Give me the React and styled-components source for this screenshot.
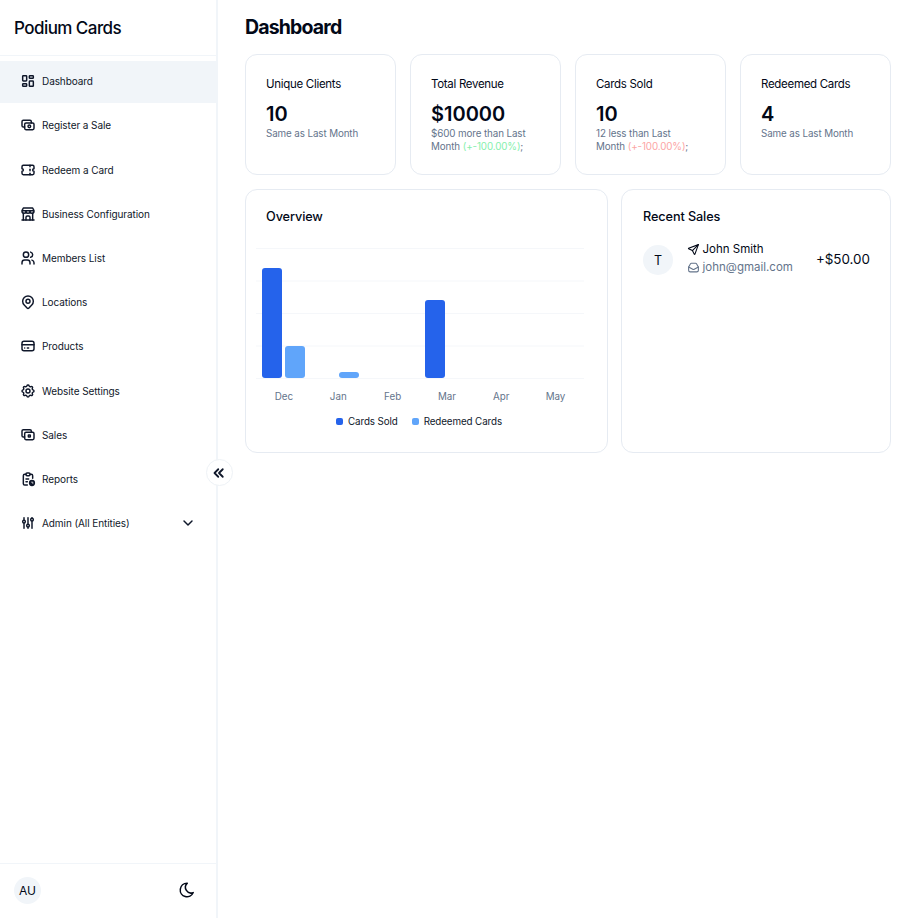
import React from 'react'
import styled, { createGlobalStyle } from 'styled-components'
import {
  TbLayoutDashboard,
  TbCash,
  TbTicket,
  TbBuildingStore,
  TbUsers,
  TbMapPin,
  TbCreditCard,
  TbSettings,
  TbAdjustments,
  TbChevronDown,
  TbChevronsLeft,
  TbMoon,
  TbSend,
} from 'react-icons/tb'

const GlobalStyle = createGlobalStyle`
  html, body { margin: 0; padding: 0; background: #fff; }
  * { box-sizing: border-box; }
  body { font-family: Inter, "Noto Sans", sans-serif; color: #020817; }
`

const Shell = styled.div`
  display: flex;
  width: 918px;
  height: 918px;
  overflow: hidden;
`

const Sidebar = styled.aside`
  position: relative;
  flex: 0 0 218px;
  display: flex;
  flex-direction: column;
  border-right: 2px solid #f1f5f9;
`

const Brand = styled.div`
  height: 56px;
  padding: 0 14px;
  display: flex;
  align-items: center;
  font-size: 17px;
  font-weight: 500;
  letter-spacing: -0.55px;
  border-bottom: 1px solid #f1f5f9;
`

const Nav = styled.nav`
  flex: 1;
  padding-top: 5px;
  display: flex;
  flex-direction: column;
`

const NavItem = styled.div`
  height: 42px;
  margin-bottom: 2.2px;
  padding: 0 20px 1.6px 20px;
  display: flex;
  align-items: center;
  gap: 6px;
  font-size: 10px;
  letter-spacing: -0.08px;
  color: #0f172a;
  background: ${(p) => (p.$active ? '#f1f5f9' : 'transparent')};
  svg {
    flex: none;
    width: 16px;
    height: 16px;
    stroke-width: 2.2;
  }
`

const NavLabel = styled.span`
  flex: 1;
`

const SideFooter = styled.div`
  height: 55px;
  padding: 0 20px 2px 14px;
  display: flex;
  align-items: center;
  justify-content: space-between;
  border-top: 1px solid #f1f5f9;
  svg { font-size: 18px; }
`

const Avatar = styled.div`
  width: 27px;
  height: 27px;
  border-radius: 50%;
  background: #f1f5f9;
  display: flex;
  align-items: center;
  justify-content: center;
  font-size: 12px;
`

const Collapse = styled.button`
  position: absolute;
  top: 459px;
  right: -17px;
  width: 27px;
  height: 27px;
  padding: 0 1px 0 0;
  border-radius: 50%;
  border: 1px solid #eef2f6;
  background: #fff;
  color: #0f172a;
  display: flex;
  align-items: center;
  justify-content: center;
  svg {
    width: 18px;
    height: 18px;
    stroke-width: 2.4;
  }
`

const Main = styled.main`
  flex: 1;
  padding: 14px 27px 0 27px;
  display: flex;
  flex-direction: column;
`

const Title = styled.h1`
  margin: 0 0 14px;
  height: 26px;
  line-height: 26px;
  font-size: 19.5px;
  font-weight: 700;
  letter-spacing: -0.85px;
`

const Stats = styled.section`
  display: grid;
  grid-template-columns: repeat(4, 1fr);
  gap: 14px;
  margin-bottom: 14px;
`

const Card = styled.div`
  border: 1px solid #e6ebf2;
  border-radius: 12px;
  background: #fff;
`

const StatCard = styled(Card)`
  height: 121px;
  padding: 22px 20px;
`

const StatLabel = styled.div`
  font-size: 11.5px;
  line-height: 15px;
  letter-spacing: -0.3px;
`

const StatValue = styled.div`
  margin-top: 10px;
  font-size: 20px;
  line-height: 24px;
  font-weight: 600;
`

const StatNote = styled.div`
  margin-top: 1px;
  font-size: 9.8px;
  line-height: 13px;
  letter-spacing: -0.1px;
  color: #64748b;
`

const Delta = styled.span`
  color: ${(p) => (p.$up ? '#86efac' : '#fca5a5')};
`

const Row = styled.section`
  display: grid;
  grid-template-columns: 363px 270px;
  gap: 13px;
`

const Panel = styled(Card)`
  height: 264px;
  padding: 19px 20px 20px ${(p) => (p.$wide ? '21px' : '20px')};
`

const PanelTitle = styled.div`
  font-size: 12.7px;
  line-height: 15px;
  font-weight: 500;
  letter-spacing: -0.1px;
`

const Chart = styled.svg`
  display: block;
  margin: 24px 0 0 -10px;
`

const Legend = styled.div`
  display: flex;
  justify-content: center;
  gap: 14px;
  margin: 3px 15px 0 0;
  font-size: 9.8px;
  letter-spacing: -0.1px;
  color: #0f172a;
`

const LegendItem = styled.span`
  display: flex;
  align-items: center;
  gap: 5px;
  &::before {
    content: '';
    width: 7px;
    height: 7px;
    border-radius: 2px;
    background: ${(p) => p.$color};
  }
`

const Sale = styled.div`
  margin-top: 16px;
  display: flex;
  align-items: center;
  gap: 14px;
`

const SaleAvatar = styled.div`
  width: 30px;
  height: 30px;
  border-radius: 50%;
  background: #f1f5f9;
  display: flex;
  align-items: center;
  justify-content: center;
  font-size: 12.5px;
`

const SaleInfo = styled.div`
  flex: 1;
  margin-bottom: 4px;
`

const SaleLine = styled.div`
  display: flex;
  align-items: center;
  gap: 3px;
  font-size: 11.5px;
  line-height: 18px;
  color: ${(p) => (p.$muted ? '#64748b' : '#020817')};
  svg {
    width: 13px;
    height: 13px;
    margin-left: -0.5px;
  }
`

const Amount = styled.div`
  margin-bottom: 2px;
  font-size: 13.4px;
  font-weight: 400;
`

// clipboard with a small clock in the lower corner
function ReportIcon() {
  return (
    <svg viewBox="0 0 24 24" fill="none" stroke="currentColor" strokeLinecap="round" strokeLinejoin="round">
      <path d="M9 5H7a2 2 0 0 0-2 2v12a2 2 0 0 0 2 2h4" />
      <path d="M15 5h2a2 2 0 0 1 2 2v4" />
      <rect x="9" y="3" width="6" height="4" rx="1.5" />
      <path d="M9 12h4M9 16h2" />
      <circle cx="18" cy="18" r="3.6" fill="currentColor" />
      <path d="M18 16.4V18h1.6" stroke="#fff" style={{ strokeWidth: 1.2 }} />
    </svg>
  )
}

// stacked notes, the front one has a small square in the middle
function SalesIcon() {
  return (
    <svg viewBox="0 0 24 24" fill="none" stroke="currentColor" strokeLinecap="round" strokeLinejoin="round">
      <path d="M17 8V6a2 2 0 0 0-2-2H5a2 2 0 0 0-2 2v7a2 2 0 0 0 2 2h2" />
      <rect x="7" y="8" width="14" height="11" rx="2" />
      <rect x="12.5" y="12" width="3" height="3" rx="0.5" />
    </svg>
  )
}

// envelope seen from the front with a rounded body and the flap line
function MailIcon() {
  return (
    <svg viewBox="0 0 24 24" fill="none" stroke="currentColor" strokeWidth="2" strokeLinecap="round" strokeLinejoin="round">
      <path d="M3 11l3.5-6a2 2 0 0 1 1.7-1h7.6a2 2 0 0 1 1.7 1L21 11v6a3 3 0 0 1-3 3H6a3 3 0 0 1-3-3z" />
      <path d="M3 11l7.6 4.2a3 3 0 0 0 2.8 0L21 11" />
    </svg>
  )
}

const items = [
  ['Dashboard', TbLayoutDashboard],
  ['Register a Sale', TbCash],
  ['Redeem a Card', TbTicket],
  ['Business Configuration', TbBuildingStore],
  ['Members List', TbUsers],
  ['Locations', TbMapPin],
  ['Products', TbCreditCard],
  ['Website Settings', TbSettings],
  ['Sales', SalesIcon],
  ['Reports', ReportIcon],
]

const stats = [
  { label: 'Unique Clients', value: '10', note: 'Same as Last Month' },
  { label: 'Total Revenue', value: '$10000', note: '$600 more than Last', note2: 'Month ', delta: '(+-100.00%)', up: true },
  { label: 'Cards Sold', value: '10', note: '12 less than Last', note2: 'Month ', delta: '(+-100.00%)' },
  { label: 'Redeemed Cards', value: '4', note: 'Same as Last Month' },
]

// x position and top of every bar, base line is y=130
const bars = [
  { x: 6, y: 20, fill: '#2563eb' },
  { x: 29, y: 98, fill: '#60a5fa' },
  { x: 83, y: 124, fill: '#60a5fa' },
  { x: 169, y: 52, fill: '#2563eb' },
]
const months = ['Dec', 'Jan', 'Feb', 'Mar', 'Apr', 'May']

export default function App() {
  return (
    <>
      <GlobalStyle />
      <Shell>
        <Sidebar>
          <Brand>Podium Cards</Brand>
          <Nav>
            {items.map(([label, Icon], i) => (
              <NavItem key={label} $active={i === 0}>
                <Icon />
                <NavLabel>{label}</NavLabel>
              </NavItem>
            ))}
            <NavItem>
              <TbAdjustments />
              <NavLabel>Admin (All Entities)</NavLabel>
              <TbChevronDown />
            </NavItem>
          </Nav>
          <SideFooter>
            <Avatar>AU</Avatar>
            <TbMoon />
          </SideFooter>
          <Collapse aria-label="Collapse">
            <TbChevronsLeft />
          </Collapse>
        </Sidebar>
        <Main>
          <Title>Dashboard</Title>
          <Stats>
            {stats.map((s) => (
              <StatCard key={s.label}>
                <StatLabel>{s.label}</StatLabel>
                <StatValue>{s.value}</StatValue>
                <StatNote>
                  {s.note}
                  {s.delta && (
                    <>
                      <br />
                      {s.note2}
                      <Delta $up={s.up}>{s.delta}</Delta>;
                    </>
                  )}
                </StatNote>
              </StatCard>
            ))}
          </Stats>
          <Row>
            <Panel>
              <PanelTitle>Overview</PanelTitle>
              <Chart width="330" height="165" viewBox="0 0 330 165">
                {[0, 32.5, 65, 97.5, 130].map((y) => (
                  <line key={y} x1="0" x2="328" y1={y + 0.5} y2={y + 0.5} stroke="#f5f7fa" />
                ))}
                {bars.map((b) => (
                  <rect key={b.x} x={b.x} y={b.y} width="20" height={130 - b.y} rx="3" fill={b.fill} />
                ))}
                {months.map((m, i) => (
                  <text key={m} x={28 + i * 54.3} y="152" textAnchor="middle" fontSize="9.8" fill="#64748b">
                    {m}
                  </text>
                ))}
              </Chart>
              <Legend>
                <LegendItem $color="#2563eb">Cards Sold</LegendItem>
                <LegendItem $color="#60a5fa">Redeemed Cards</LegendItem>
              </Legend>
            </Panel>
            <Panel $wide>
              <PanelTitle>Recent Sales</PanelTitle>
              <Sale>
                <SaleAvatar>T</SaleAvatar>
                <SaleInfo>
                  <SaleLine>
                    <TbSend />
                    John Smith
                  </SaleLine>
                  <SaleLine $muted>
                    <MailIcon />
                    john@gmail.com
                  </SaleLine>
                </SaleInfo>
                <Amount>+$50.00</Amount>
              </Sale>
            </Panel>
          </Row>
        </Main>
      </Shell>
    </>
  )
}
